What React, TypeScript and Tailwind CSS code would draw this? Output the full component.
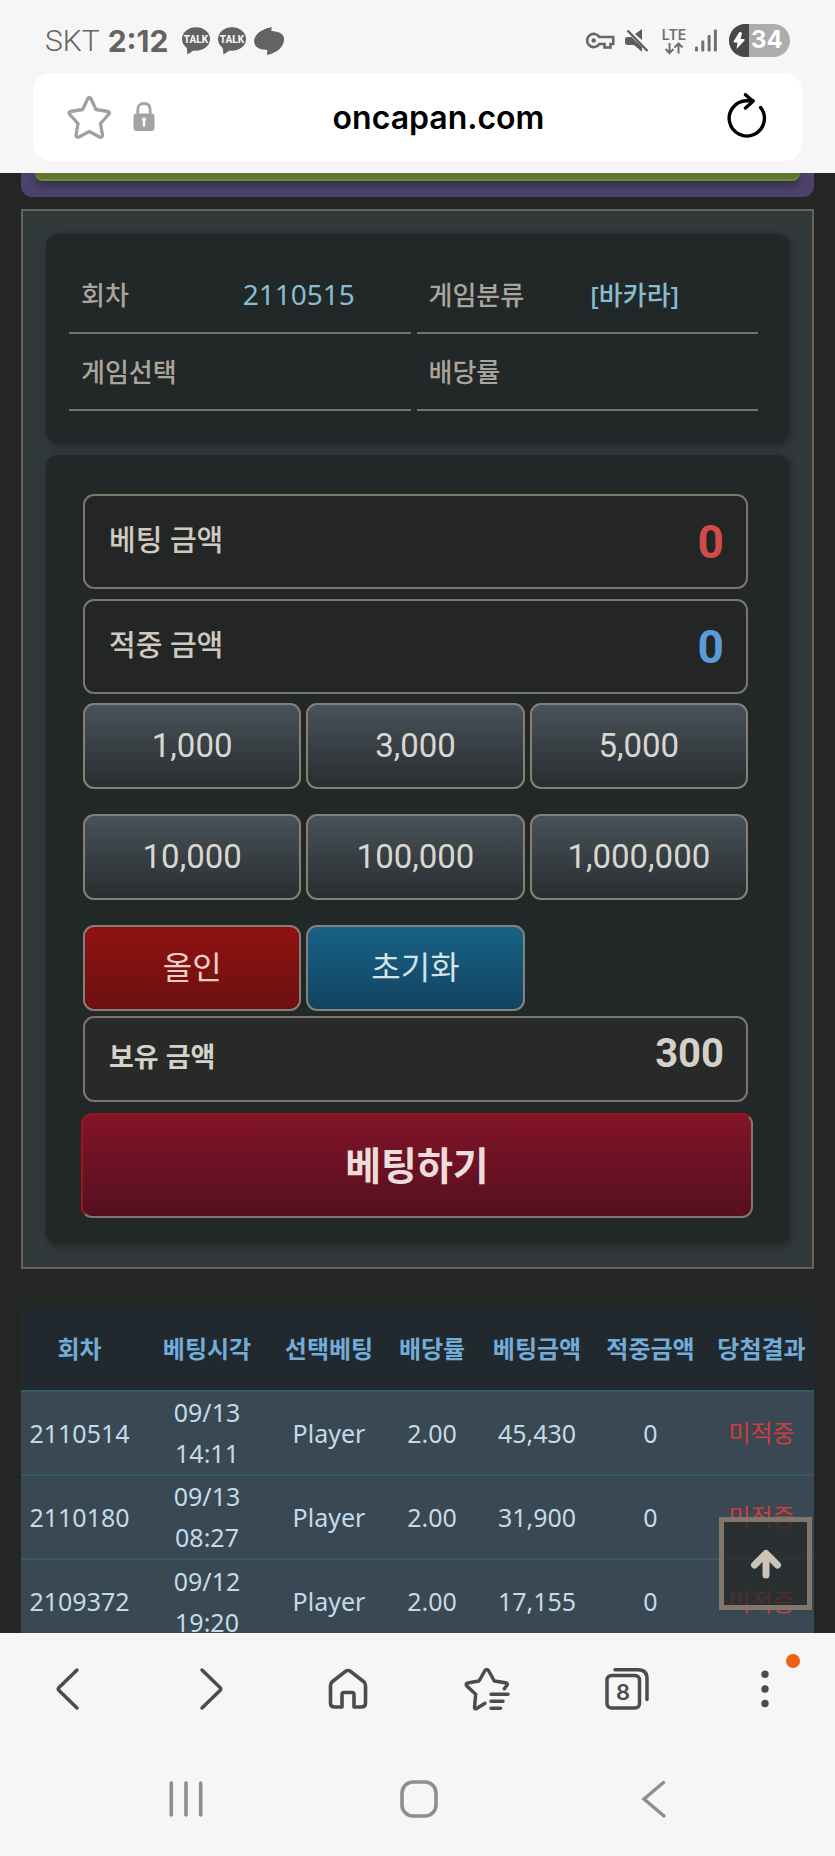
import { useState, type ReactNode } from "react";

const chips = [1000, 3000, 5000, 10000, 100000, 1000000];

const history = [
  { round: "2110514", date: "09/13", time: "14:11", pick: "Player", odds: "2.00", bet: 45430, win: 0, result: "미적중" },
  { round: "2110180", date: "09/13", time: "08:27", pick: "Player", odds: "2.00", bet: 31900, win: 0, result: "미적중" },
  { round: "2109372", date: "09/12", time: "19:20", pick: "Player", odds: "2.00", bet: 17155, win: 0, result: "미적중" },
];

const TalkIcon = () => (
  <svg width="28" height="28" viewBox="0 0 28 28" aria-hidden="true">
    <ellipse cx="14" cy="12" rx="14" ry="11.8" fill="#636363" />
    <path d="M4.5 19 L5.5 27.5 L13 22.5 Z" fill="#636363" />
    <text x="14" y="15.5" textAnchor="middle" fontSize="10" fontWeight="800" fill="#f6f6f6" fontFamily="Roboto, sans-serif">
      TALK
    </text>
  </svg>
);

const StatusBar = () => (
  <div className="flex h-[73px] items-center justify-between px-[45px] pt-2 text-[#636363]">
    <div className="flex items-center font-['Inter',sans-serif] text-[30px] leading-9">
      <span className="font-['Roboto',sans-serif] font-light">SKT</span>
      <span className="ml-2 font-bold">2:12</span>
      <div className="ml-3.5 flex items-center gap-2">
        <TalkIcon />
        <TalkIcon />
        <svg width="31" height="28" viewBox="0 0 31 28" aria-hidden="true">
          <path
            d="M17.7 0 L17.3 4 Q24 4.5 27 6.5 Q30.5 9 30 13.5 Q29 20 23 24 Q18 27 13 28 L13.3 23 Q5 22.5 2 19.5 Q-0.5 16.5 0.3 12.5 Q1.5 7.5 7 4 Q12 1 17.7 0 Z"
            fill="#636363"
          />
        </svg>
      </div>
    </div>
    <div className="flex items-center">
      <svg width="29" height="18" viewBox="0 0 29 18" fill="none" stroke="#666" strokeWidth="2.6" aria-hidden="true">
        <path d="M13.3 5 A6.6 6.6 0 1 0 13.3 12 H18.5 V15.5 H24.5 V12 H27.2 V5 Z" />
        <circle cx="7.7" cy="8.5" r="2.2" fill="#666" stroke="none" />
      </svg>
      <svg className="ml-2.5" width="24" height="24" viewBox="0 0 24 24" fill="#5c5c5c" aria-hidden="true">
        <path d="M10 5 L17 0 V11 Z" />
        <path d="M0 10 Q0 8 3 8 H6.5 L17 18 V22.8 L9 16 H3 Q0 16 0 13.5 Z" />
        <path d="M2.5 1.5 L22.5 22" stroke="#5c5c5c" strokeWidth="2.4" />
      </svg>
      <svg className="ml-2.5" width="30" height="28" viewBox="0 0 30 28" fill="none" stroke="#707070" strokeWidth="2" aria-hidden="true">
        <text x="15" y="13" textAnchor="middle" fontSize="14" fontWeight="600" fill="#707070" stroke="none" fontFamily="Inter, sans-serif">
          LTE
        </text>
        <path d="M10.500 16 V26 M6.500 22 L10.500 26 L14.500 22 M19.500 26.500 V16.500 M15.500 20.500 L19.500 16.500 L23.500 20.500" />
      </svg>
      <svg className="ml-1.5" width="22" height="23" viewBox="0 0 22 23" fill="#707070" aria-hidden="true">
        <rect x="0" y="17.5" width="3" height="5" rx="1" />
        <rect x="6.3" y="11.5" width="3" height="11" rx="1" />
        <rect x="12.6" y="6" width="3" height="16.5" rx="1" />
        <rect x="18.9" y="0.5" width="3" height="22" rx="1" />
      </svg>
      <div className="ml-3 flex h-[33px] w-[61px] overflow-hidden rounded-full bg-[#acacac]">
        <div className="flex w-5 items-center justify-center bg-[#484848]">
          <svg width="12" height="18" viewBox="0 0 12 18" fill="#fff" aria-hidden="true">
            <path d="M6 0.5 L0.5 9.5 Q0.3 10.5 1.5 10.5 H4.5 L3.5 17 L11.5 8.5 Q12 7 10.5 7 H7.5 L9 1 Q8 -0.5 6 0.5 Z" />
          </svg>
        </div>
        <span className="pl-0.5 font-['Inter',sans-serif] text-2xl leading-8 font-bold text-white">34</span>
      </div>
    </div>
  </div>
);

const AddressBar = () => (
  <div className="mx-[33px] mb-3 flex h-[88px] items-center rounded-[18px] bg-white px-8">
    <button type="button" aria-label="북마크 추가">
      <svg width="48" height="48" viewBox="0 0 48 48" fill="none" stroke="#a0a0a0" strokeWidth="3.3" strokeLinejoin="round">
        <path d="M22.8 5.5 Q24.3 3.500 25.800 5.500 L31 16.500 L43 18.500 Q45.500 19.500 43.500 21.500 L35.500 30.500 L37.500 42.500 Q37 45 34.500 44 L24.300 38.500 L14 44 Q11.500 45 11 42.500 L13 30.500 L4.800 21.500 Q3 19.500 5.500 18.500 L17.600 16.500 Z" />
      </svg>
    </button>
    <svg className="ml-5" width="22" height="30" viewBox="0 0 22 30" aria-hidden="true">
      <path d="M4.8 14 V8 Q4.8 1.5 11 1.5 Q17.2 1.5 17.2 8 V14" fill="none" stroke="#a3a3a3" strokeWidth="2.8" />
      <rect x="0.5" y="11.5" width="21" height="17.5" rx="3" fill="#a3a3a3" />
      <path d="M9 17.5 A2 2 0 1 1 13 17.5 L12.2 20 V24.5 H9.8 V20 Z" fill="#fff" />
    </svg>
    <input
      readOnly
      value="oncapan.com"
      aria-label="주소"
      className="min-w-0 flex-1 bg-transparent pt-0.5 text-center font-['Inter',sans-serif] text-[32px] leading-10 font-semibold text-black outline-none"
    />
    <button type="button" aria-label="새로고침">
      <svg width="48" height="48" viewBox="0 0 48 48" fill="none" stroke="#000" strokeWidth="3.4" strokeLinecap="round" strokeLinejoin="round">
        <path d="M38.6 14.5 A17.6 17.6 0 1 1 24.5 7.8 H31" />
        <path d="M23.5 1.7 L31 8.3 L23.5 15" />
      </svg>
    </button>
  </div>
);

const InfoItem = ({ label, children }: { label: string; children?: ReactNode }) => (
  <div className="flex h-[77px] items-center border-b-2 border-[#77726a] text-[26px] leading-9 font-medium">
    <dt className="w-1/2 pl-3 text-[#aaa59c]">{label}</dt>
    <dd className="w-1/2 pl-[3px] text-[#86bdd3]">{children}</dd>
  </div>
);

const AmountBox = ({ id, label, value, tone }: { id: string; label: string; value: number; tone: string }) => (
  <div className="flex h-[95px] items-center justify-between rounded-[11px] border-2 border-[#7d766b] bg-[#242625] pr-[22px] pl-6">
    <label htmlFor={id} className="pb-1 text-[29px] font-medium text-[#cfcac1]">{label}</label>
    <output id={id} className={`font-['Roboto',sans-serif] text-[46px] leading-none font-bold ${tone}`}>
      {value.toLocaleString("en-US")}
    </output>
  </div>
);

const ToTopButton = () => (
  <button
    type="button"
    aria-label="맨 위로"
    className="absolute right-[23px] bottom-[23px] flex size-[93px] items-center justify-center border-[5px] border-[#80776a] bg-[#252828]/75"
  >
    <svg width="32" height="30" viewBox="0 0 32 30" fill="none" stroke="#c9c3b8" strokeWidth="7" strokeLinecap="round" strokeLinejoin="round">
      <path d="M4.5 16 L16 4.5 L27.5 16" />
      <path d="M16 6 V26" />
    </svg>
  </button>
);

const BrowserToolbar = () => (
  <footer className="shrink-0 bg-[#f6f6f6] pb-[3px]">
    <nav aria-label="브라우저 도구" className="grid h-28 grid-cols-6 place-items-center">
      <button type="button" aria-label="뒤로">
        <svg width="48" height="48" viewBox="0 0 48 48" fill="none" stroke="#4c4c4e" strokeWidth="3.5" strokeLinecap="round">
          <path d="M31 5 L13 22.5 Q11.5 24 13 25.5 L31 43" />
        </svg>
      </button>
      <button type="button" aria-label="앞으로">
        <svg width="48" height="48" viewBox="0 0 48 48" fill="none" stroke="#4c4c4e" strokeWidth="3.5" strokeLinecap="round">
          <path d="M17 5 L35 22.5 Q36.5 24 35 25.5 L17 43" />
        </svg>
      </button>
      <button type="button" aria-label="홈">
        <svg width="48" height="48" viewBox="0 0 48 48" fill="none" stroke="#4c4c4e" strokeWidth="3.6" strokeLinejoin="round">
          <path d="M18 42 V29.5 Q18 27.5 20 27.5 H28 Q30 27.5 30 29.5 V42 H37.5 Q41.5 42 41.5 38 V20.5 Q41.5 18 39.5 16.5 L26.5 6.3 Q24 4.7 21.5 6.3 L8.5 16.5 Q6.5 18 6.5 20.5 V38 Q6.5 42 10.5 42 Z" />
        </svg>
      </button>
      <button type="button" aria-label="북마크">
        <svg width="48" height="48" viewBox="0 0 48 48" fill="none" stroke="#4c4c4e" strokeWidth="3.5" strokeLinecap="round" strokeLinejoin="round">
          <path d="M41.3 23.8 L43.8 20.5 Q45.3 18.5 42.5 17.7 L31.3 16 L25.5 5.5 Q23.7 3.5 22 5.5 L16 16 L4.5 18 Q2.2 19 3.8 21 L12.7 29.3 L11.5 42 Q11.5 44.5 14 43.3 L22 38.3" />
          <path d="M28 29.3 H45 M28 36.3 H40 M28 43.3 H37.5" />
        </svg>
      </button>
      <button type="button" aria-label="탭 8개">
        <svg width="48" height="48" viewBox="0 0 48 48" fill="none" stroke="#4c4c4e" strokeWidth="3.5" strokeLinecap="round">
          <rect x="5" y="10.5" width="32.5" height="32.5" rx="4.5" />
          <path d="M13 4.7 H36 Q45 4.7 45 13.7 V34.5" />
          <text x="21" y="34.5" textAnchor="middle" fontSize="22" fontWeight="600" fill="#4c4c4e" stroke="none" fontFamily="Inter, sans-serif">
            8
          </text>
        </svg>
      </button>
      <button type="button" aria-label="더보기" className="relative">
        <svg width="48" height="48" viewBox="0 0 48 48" fill="#4c4c4e">
          <circle cx="24" cy="9.3" r="3.7" />
          <circle cx="24" cy="24" r="3.7" />
          <circle cx="24" cy="38.5" r="3.7" />
        </svg>
        <span className="absolute -top-[11px] -right-[11px] size-3.5 rounded-full bg-[#ee6012]" />
      </button>
    </nav>
    <nav aria-label="시스템" className="grid h-[108px] grid-cols-3 place-items-center px-[68px]">
      <button type="button" aria-label="최근 앱">
        <svg width="48" height="48" viewBox="0 0 48 48" stroke="#8e8e8e" strokeWidth="3.6" strokeLinecap="round">
          <path d="M10.3 8 V40 M25 8 V40 M39.7 8 V40" />
        </svg>
      </button>
      <button type="button" aria-label="홈 화면">
        <svg width="48" height="48" viewBox="0 0 48 48" fill="none" stroke="#8e8e8e" strokeWidth="3.6">
          <rect x="8" y="7" width="34" height="34" rx="11" />
        </svg>
      </button>
      <button type="button" aria-label="이전 화면">
        <svg width="48" height="48" viewBox="0 0 48 48" fill="none" stroke="#8e8e8e" strokeWidth="3.4" strokeLinecap="round">
          <path d="M36.5 7.5 L17 24 L37 41" />
        </svg>
      </button>
    </nav>
  </footer>
);

const App = () => {
  const balance = 300;
  const [amount, setAmount] = useState(0);

  return (
    <div className="flex h-screen flex-col overflow-hidden bg-[#242625] font-['Noto_Sans','Noto_Sans_CJK_KR',sans-serif]">
      <header className="shrink-0 bg-[#f6f6f6]">
        <StatusBar />
        <AddressBar />
      </header>

      <main className="relative min-h-0 flex-1 overflow-hidden px-[21px]">
        {/* Bottom edge of the game board */}
        <div className="h-6 rounded-b-[11px] bg-[#4c426c] px-3.5">
          <div className="h-2 rounded-b-[11px] border-b-2 border-[#6c8f30] bg-[#5f772c] shadow-[0_4px_8px_rgba(0,0,0,0.4)]" />
        </div>

        <section className="mt-3 border-2 border-[#66635b] bg-[#32393b] p-[23px]">
          <dl className="grid grid-cols-2 gap-x-1.5 rounded-xl bg-[#222727] pt-[23px] pr-[31px] pb-8 pl-[23px] shadow-[2px_2px_8px_rgba(0,0,0,0.35)]">
            <InfoItem label="회차">
              <span className="text-[28px] font-normal">2110515</span>
            </InfoItem>
            <InfoItem label="게임분류">[바카라]</InfoItem>
            <InfoItem label="게임선택" />
            <InfoItem label="배당률" />
          </dl>

          <form
            onSubmit={(e) => e.preventDefault()}
            className="mt-3 rounded-xl bg-[#222727] pt-[39px] pr-9 pb-[26px] pl-[35px] shadow-[2px_2px_8px_rgba(0,0,0,0.35)]"
          >
            <div className="pr-[5px] pl-0.5">
              <div className="flex flex-col gap-2.5">
                <AmountBox id="bet-amount" label="베팅 금액" value={amount} tone="text-[#d14b49]" />
                <AmountBox id="win-amount" label="적중 금액" value={0} tone="text-[#5b9bd8]" />
              </div>

              <div className="mt-[9px] grid grid-cols-3 gap-x-[5px] gap-y-[25px] font-['Roboto','Noto_Sans_CJK_KR',sans-serif]">
                {chips.map((chip) => (
                  <button
                    key={chip}
                    type="button"
                    onClick={() => setAmount(amount + chip)}
                    className="h-[86px] rounded-[11px] border-2 border-[#857f76] bg-linear-to-b from-[#475259] to-[#2a2e31] text-[33px] text-[#dad6d0]"
                  >
                    {chip.toLocaleString("en-US")}
                  </button>
                ))}
                <button
                  type="button"
                  onClick={() => setAmount(balance)}
                  className="h-[86px] rounded-[11px] border-2 border-[#857f76] bg-linear-to-b from-[#901210] to-[#6c1010] text-[32px] text-[#f0cfc6]"
                >
                  올인
                </button>
                <button
                  type="button"
                  onClick={() => setAmount(0)}
                  className="h-[86px] rounded-[11px] border-2 border-[#7f8483] bg-linear-to-b from-[#186286] to-[#134361] text-[32px] text-[#d3e3e8]"
                >
                  초기화
                </button>
              </div>

              <div className="mt-[5px] flex h-[86px] items-baseline justify-between rounded-[11px] border-2 border-[#7d766b] bg-[#282a29] pt-3 pr-[22px] pl-6 font-bold text-[#d6d1c8]">
                <label htmlFor="balance" className="text-[27px] leading-10">보유 금액</label>
                <output id="balance" className="font-['Roboto',sans-serif] text-[40px] leading-[48px]">{balance}</output>
              </div>
            </div>

            <button
              type="submit"
              className="mt-[11px] h-[105px] w-full rounded-[11px] border-2 border-t-[#9c151d] border-r-[#857770] border-b-[#857770] border-l-[#9c151d] bg-linear-to-b from-[#831329] to-[#54101f] text-[39px] font-bold text-[#ecdcda]"
            >
              베팅하기
            </button>
          </form>
        </section>

        <table className="mt-[38px] w-full table-fixed text-center">
          <colgroup>
            <col className="w-[117px]" />
            <col className="w-[138px]" />
            <col className="w-[106px]" />
            <col className="w-[100px]" />
            <col className="w-[110px]" />
            <col className="w-[117px]" />
            <col className="w-[105px]" />
          </colgroup>
          <thead>
            <tr className="h-[84px] bg-[#21282e] text-2xl whitespace-nowrap text-[#72acd8]">
              <th>회차</th>
              <th>베팅시각</th>
              <th>선택베팅</th>
              <th>배당률</th>
              <th>베팅금액</th>
              <th>적중금액</th>
              <th>당첨결과</th>
            </tr>
          </thead>
          <tbody>
            {history.map((row) => (
              <tr key={row.round} className="h-[84px] border-t-2 border-[#375867] bg-[#394852] text-[25px] leading-[41px] text-[#c3dbe8]">
                <td>{row.round}</td>
                <td>
                  {row.date}
                  <br />
                  {row.time}
                </td>
                <td>{row.pick}</td>
                <td>{row.odds}</td>
                <td>{row.bet.toLocaleString("en-US")}</td>
                <td>{row.win}</td>
                <td className="text-2xl text-[#cf3d3f]">{row.result}</td>
              </tr>
            ))}
          </tbody>
        </table>

        <ToTopButton />
      </main>

      <BrowserToolbar />
    </div>
  );
};

export default App;
